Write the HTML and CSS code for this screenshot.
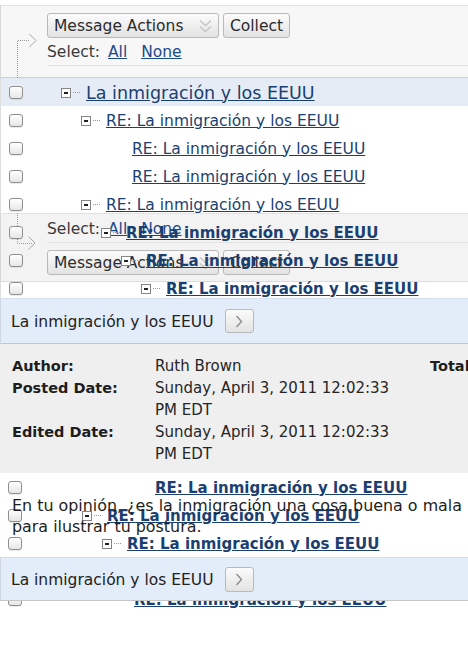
FILE: index.html
```html
<!DOCTYPE html>
<html lang="es">
<head>
<meta charset="utf-8">
<title>Discusión</title>
<link rel="stylesheet" href="styles.css">
</head>
<body>
<div class="page">
  <div class="toolbar">
    <svg class="connector" width="40" height="45" viewBox="0 0 40 45">
      <path d="M17.5 45 V7.5 H29" fill="none" stroke="#9a9a9a" stroke-dasharray="1 1"/>
      <path d="M29.5 1 L36 7.5 L29.5 14" fill="none" stroke="#a8a8a8" stroke-width="1"/>
    </svg>
    <div class="actions">
      <span class="select">Message Actions
        <svg class="chev" width="13" height="14" viewBox="0 0 13 14"><path d="M1 1.5 L6.5 6.5 L12 1.5 M1 7.5 L6.5 12.5 L12 7.5" fill="none" stroke="#c4c4c4" stroke-width="1.4"/></svg>
      </span>
      <span class="btn collect">Collect</span>
    </div>
    <div class="selectline">Select: <a href="#" class="all">All</a> <a href="#" class="none">None</a></div>
  </div>

  <div class="tree">
    <div class="ghost">
      <svg class="ghost-connector" width="40" height="40" viewBox="0 0 40 40">
        <path d="M17.5 0 V30.5 H33" fill="none" stroke="#9a9a9a" stroke-dasharray="1 1"/>
        <path d="M28.5 23.5 L35 30 L28.5 36.5" fill="none" stroke="#a8a8a8" stroke-width="1"/>
      </svg>
      <div class="selectline ghost-line">Select: <a href="#" class="all">All</a> <a href="#" class="none">None</a></div>
      <div class="actions ghost-actions">
        <span class="select">Message Actions
          <svg class="chev" width="13" height="14" viewBox="0 0 13 14"><path d="M1 1.5 L6.5 6.5 L12 1.5 M1 7.5 L6.5 12.5 L12 7.5" fill="none" stroke="#c4c4c4" stroke-width="1.4"/></svg>
        </span>
        <span class="btn collect">Collect</span>
      </div>
    </div>

    <div class="row current"><span class="cb"></span><span class="node lvl-60"><span class="minus"></span><span class="dots"></span><a href="#" class="link big">La inmigración y los EEUU</a></span></div>
    <div class="row"><span class="cb"></span><span class="node lvl-80"><span class="minus"></span><span class="dots"></span><a href="#" class="link">RE: La inmigración y los EEUU</a></span></div>
    <div class="row"><span class="cb"></span><span class="node leaf-131"><a href="#" class="link">RE: La inmigración y los EEUU</a></span></div>
    <div class="row"><span class="cb"></span><span class="node leaf-131"><a href="#" class="link">RE: La inmigración y los EEUU</a></span></div>
    <div class="row"><span class="cb"></span><span class="node lvl-80"><span class="minus"></span><span class="dots"></span><a href="#" class="link">RE: La inmigración y los EEUU</a></span></div>
    <div class="row"><span class="cb"></span><span class="node lvl-100"><span class="minus"></span><span class="dots"></span><a href="#" class="link unread">RE: La inmigración y los EEUU</a></span></div>
    <div class="row"><span class="cb"></span><span class="node lvl-120"><span class="minus"></span><span class="dots"></span><a href="#" class="link unread">RE: La inmigración y los EEUU</a></span></div>
    <div class="row"><span class="cb"></span><span class="node lvl-140"><span class="minus"></span><span class="dots"></span><a href="#" class="link unread">RE: La inmigración y los EEUU</a></span></div>
  </div>

  <div class="subject">
    <span class="subject-title">La inmigración y los EEUU</span>
    <span class="btn next"><svg width="8" height="13" viewBox="0 0 8 13"><path d="M1.5 1 L6.5 6.5 L1.5 12" fill="none" stroke="#8a8a8a" stroke-width="1.3"/></svg></span>
  </div>

  <div class="details">
    <div class="label">Author:</div><div class="value">Ruth Brown</div><div class="label total">Total</div>
    <div class="label">Posted Date:</div><div class="value">Sunday, April 3, 2011 12:02:33<br>PM EDT</div><div></div>
    <div class="label">Edited Date:</div><div class="value">Sunday, April 3, 2011 12:02:33<br>PM EDT</div><div></div>
  </div>

  <div class="message">
    <p class="body">En tu opinión, ¿es la inmigración una cosa buena o mala<br>para ilustrar tu postura.</p>
    <div class="row"><span class="cb"></span><span class="node leaf-155"><a href="#" class="link unread">RE: La inmigración y los EEUU</a></span></div>
    <div class="row"><span class="cb"></span><span class="node lvl-82"><span class="minus"></span><span class="dots"></span><a href="#" class="link unread">RE: La inmigración y los EEUU</a></span></div>
    <div class="row"><span class="cb"></span><span class="node lvl-102"><span class="minus"></span><span class="dots"></span><a href="#" class="link unread">RE: La inmigración y los EEUU</a></span></div>
    <div class="row"><span class="cb"></span><span class="node lvl-102"><span class="minus"></span><span class="dots"></span><a href="#" class="link unread">RE: La inmigración y los EEUU</a></span></div>
    <div class="row"><span class="cb"></span><span class="node leaf-134"><a href="#" class="link unread">RE: La inmigración y los EEUU</a></span></div>
    <div class="subject overlay">
      <span class="subject-title">La inmigración y los EEUU</span>
      <span class="btn next"><svg width="8" height="13" viewBox="0 0 8 13"><path d="M1.5 1 L6.5 6.5 L1.5 12" fill="none" stroke="#8a8a8a" stroke-width="1.3"/></svg></span>
    </div>
  </div>
</div>
</body>
</html>
```

FILE: styles.css
```css
html, body {
  margin: 0;
  padding: 0;
  background: #fff;
  overflow: hidden;
}
body {
  width: 468px;
  height: 645px;
  font-family: "DejaVu Sans", "Liberation Sans", sans-serif;
  font-size: 15.5px;
  color: #222;
}
.page {
  position: relative;
}

/* toolbar */
.toolbar {
  position: relative;
  margin-top: 5px;
  height: 71px;
  border-top: 1px solid #e4e4e4;
  border-left: 1px solid #d8d8d8;
  border-bottom: 1px solid #cfcfcf;
  background: #f7f7f7;
  padding-left: 46px;
}
.connector {
  position: absolute;
  left: -1px;
  top: 27px;
}
.actions {
  display: flex;
  gap: 4px;
  padding-top: 7px;
}
.select {
  box-sizing: border-box;
  width: 172px;
  height: 25px;
  display: flex;
  align-items: center;
  justify-content: space-between;
  padding: 0 6px 0 6px;
  border: 1px solid #b9b9b9;
  border-radius: 3px;
  background: linear-gradient(#fbfbfb, #e3e3e3);
  color: #2b2b2b;
  font-size: 15.5px;
  white-space: nowrap;
}
.btn {
  box-sizing: border-box;
  display: inline-flex;
  align-items: center;
  justify-content: center;
  border: 1px solid #b9b9b9;
  border-radius: 3px;
  background: linear-gradient(#fbfbfb, #e3e3e3);
  color: #2b2b2b;
}
.collect {
  width: 67px;
  height: 25px;
  font-size: 15.5px;
}
.selectline {
  margin-top: 4px;
  height: 20px;
  line-height: 20px;
  padding-bottom: 3px;
  border-bottom: 1px solid #e2e2e2;
  color: #3a3a3a;
  white-space: nowrap;
}
.selectline a {
  color: #1b4a8a;
  text-decoration: underline;
}
.selectline .all { margin-left: 3px; }
.selectline .none { margin-left: 9px; }

/* tree */
.tree {
  position: relative;
  height: 220px;
  border-left: 1px solid #dedede;
}
.ghost {
  position: absolute;
  z-index: 0;
  left: -1px;
  right: 0;
  top: 135px;
  height: 67px;
  border-top: 1px solid #e2e2e2;
  border-left: 1px solid #d8d8d8;
  border-bottom: 1px solid #dcdcdc;
  background: #f3f3f3;
  padding-left: 46px;
}
.ghost-connector {
  position: absolute;
  left: -1px;
  top: -1px;
}
.ghost-line {
  margin-top: 5px;
  padding-bottom: 3px;
}
.ghost-actions {
  padding-top: 7px;
}
.row {
  position: relative;
  z-index: 1;
  height: 28px;
  display: flex;
  align-items: center;
}
.row.current {
  background: #e6ecf5;
}
.cb {
  flex: none;
  box-sizing: border-box;
  width: 14px;
  height: 13px;
  margin-left: 8px;
  border: 1px solid #8e8e8e;
  border-radius: 3px;
  background: linear-gradient(#ffffff, #e6e6e6);
  box-shadow: 0 1px 0 rgba(0,0,0,0.08);
}
.node {
  display: flex;
  align-items: center;
  white-space: nowrap;
  padding-top: 1px;
}
.lvl-60 { margin-left: 38px; }
.lvl-80 { margin-left: 58px; }
.lvl-82 { margin-left: 60px; }
.lvl-100 { margin-left: 78px; }
.lvl-102 { margin-left: 80px; }
.lvl-120 { margin-left: 98px; }
.lvl-140 { margin-left: 118px; }
.leaf-131 { margin-left: 109px; }
.leaf-134 { margin-left: 112px; }
.leaf-155 { margin-left: 133px; }
.minus {
  position: relative;
  flex: none;
  box-sizing: border-box;
  width: 10px;
  height: 10px;
  border: 1px solid #858585;
  background: #fff;
}
.minus::after {
  content: "";
  position: absolute;
  left: 2px;
  right: 2px;
  top: 3px;
  height: 2px;
  background: #222;
}
.dots {
  flex: none;
  width: 7px;
  margin: 0 6px 0 2px;
  border-top: 1px dotted #9a9a9a;
}
.link {
  color: #1b3f70;
  text-decoration: underline;
  font-size: 15.5px;
}
.link.big {
  font-size: 17.5px;
}
.link.unread {
  font-weight: bold;
  font-size: 15px;
}

/* subject bar */
.subject {
  position: relative;
  z-index: 2;
  box-sizing: border-box;
  height: 46px;
  display: flex;
  align-items: center;
  padding-left: 10px;
  background: #e3edfa;
  border-top: 1px solid #d6e0ec;
  border-left: 1px solid #cfd6df;
  border-bottom: 1px solid #c6c6c6;
}
.subject-title {
  white-space: nowrap;
  padding-top: 1px;
}
.next {
  width: 29px;
  height: 24px;
  margin-left: 11px;
}

/* details */
.details {
  box-sizing: border-box;
  height: 129px;
  padding: 11px 0 0 12px;
  background: #efefef;
  display: grid;
  grid-template-columns: 143px 275px 60px;
  grid-auto-rows: min-content;
  line-height: 22px;
  font-size: 15px;
  white-space: nowrap;
  overflow: hidden;
}
.label {
  font-weight: bold;
  color: #1e1e1e;
  font-size: 14.5px;
}
.value {
  color: #262626;
}

/* message */
.message {
  position: relative;
  height: 140px;
}
.body {
  position: absolute;
  z-index: 2;
  left: 12px;
  top: 22px;
  margin: 0;
  font-size: 15.9px;
  line-height: 21px;
  white-space: nowrap;
  color: #1e1e1e;
}
.subject.overlay {
  position: absolute;
  z-index: 3;
  left: 0;
  right: 0;
  top: 84px;
  height: 44px;
}
.subject.overlay .next {
  height: 25px;
}
```
